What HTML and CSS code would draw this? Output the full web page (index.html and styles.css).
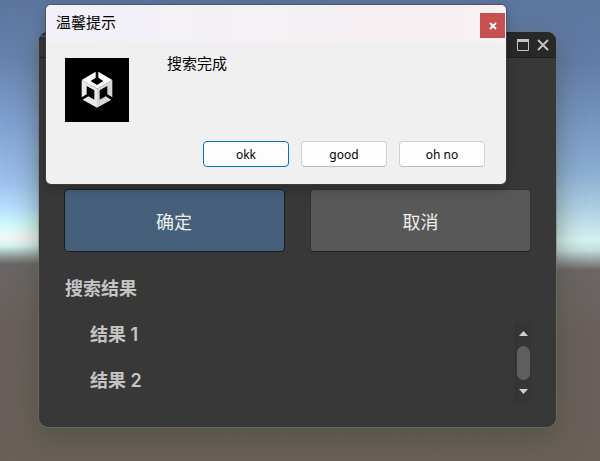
FILE: index.html
```
<!DOCTYPE html>
<html lang="zh-CN">
<head>
<meta charset="utf-8">
<title>温馨提示</title>
<link rel="stylesheet" href="styles.css">
</head>
<body>
<div class="desktop">
  <section class="window">
    <header class="window-bar">
      <svg class="window-icons" width="34" height="14" viewBox="0 0 34 14">
        <path d="M.5 1.500h11v11H.5z" fill="none" stroke="#c4c4c4"/>
        <path d="M0 1h12v3H0z" fill="#c4c4c4"/>
        <path d="M21 2l10 10M31 2l-10 10" fill="none" stroke="#c4c4c4" stroke-width="1.900"/>
      </svg>
    </header>
    <div class="window-body">
      <div class="actions">
        <button class="action action-primary">确定</button>
        <button class="action">取消</button>
      </div>
      <h2 class="heading">搜索结果</h2>
      <div class="results">
        <ul class="result-list">
          <li>结果 1</li>
          <li>结果 2</li>
        </ul>
        <div class="scrollbar">
          <svg width="9" height="5" viewBox="0 0 9 5"><path d="M0 5l4.500-5L9 5z" fill="#d0d0d0"/></svg>
          <div class="thumb"></div>
          <svg width="9" height="5" viewBox="0 0 9 5"><path d="M0 0l4.500 5L9 0z" fill="#d0d0d0"/></svg>
        </div>
      </div>
    </div>
  </section>
  <section class="dialog">
    <header class="dialog-bar">
      <span class="dialog-title">温馨提示</span>
      <button class="dialog-close"><svg width="8" height="8" viewBox="0 0 8 8"><path d="M1 1l6 6M7 1l-6 6" stroke="#fff" stroke-width="1.800"/></svg></button>
    </header>
    <div class="dialog-content">
      <div class="logo">
        <svg width="38" height="44" viewBox="0 0 114 132">
          <path fill="#e9e9e9" d="M11 36V88L26 79V54L49 67V95L31 85L14 95L57 119V62Z"/>
          <path fill="#d6d6d6" d="M103 36V88L88 79V54L65 67V95L83 85L100 95L57 119V62Z"/>
          <path fill="#fff" d="M53 11L11 36L57 62L103 36L61 11V29L76 39L57 51L38 39L53 29Z"/>
        </svg>
      </div>
      <p class="message">搜索完成</p>
    </div>
    <footer class="dialog-buttons">
      <button class="choice choice-default">okk</button>
      <button class="choice">good</button>
      <button class="choice">oh no</button>
    </footer>
  </section>
</div>
</body>
</html>
```
FILE: styles.css
```
* { box-sizing: border-box; }

body {
  margin: 0;
  font-family: "Noto Sans", "Noto Sans CJK SC", sans-serif;
}

button {
  padding: 0;
  font-family: inherit;
}

.desktop {
  position: relative;
  width: 600px;
  height: 461px;
  overflow: hidden;
  background: linear-gradient(#5c759e 0, #6883af 60px, #7f9fcf 120px, #9cbfec 180px, #b5dffd 208px, #d3fbfb 225px, #f4f8f6 238px, #d5f3ef 246px, #858e8d 258px, #6b6665 264px, #695f5b 330px, #6a605a 461px);
}

.desktop::before {
  content: "";
  position: absolute;
  inset: 0;
  background: linear-gradient(#5c769f 0, #627ba7 60px, #7593bf 120px, #8aabd2 170px, #aacbe0 205px, #d3f0f0 240px, #c5dedd 250px, #8c9695 262px, #6b6665 270px, #695f5b 340px, #6a605a 461px);
  mask-image: linear-gradient(90deg, transparent, #000);
}

.window {
  position: absolute;
  left: 39px;
  top: 32px;
  width: 517px;
  height: 395px;
  display: flex;
  flex-direction: column;
  background: #383838;
  border-radius: 9px;
  box-shadow: 0 0 0 1px rgba(120, 120, 120, .5), 0 10px 28px rgba(64, 70, 48, .52);
}

.window-bar {
  display: flex;
  justify-content: flex-end;
  height: 26px;
  padding: 6px 5px 0 0;
  background: linear-gradient(90deg, #383838 7px, #282828 7px);
  border-bottom: 1px solid #202020;
  border-radius: 9px 9px 0 0;
  box-shadow: inset 0 2px 0 #282828;
}

.window-bar::before {
  content: "";
  width: 6px;
  height: 2px;
  margin: -3px auto 0 1px;
  background: #2c5d87;
}

.window-body { padding: 131px 25px 0; }

.actions {
  display: flex;
  gap: 25px;
}

.action {
  width: 221px;
  height: 63px;
  color: #eee;
  font-size: 18px;
  background: #585858;
  border: 1px solid #303030;
  border-bottom-color: #222;
  border-radius: 4px;
}

.action-primary {
  padding-right: 1px;
  background: #46607c;
  border-color: #1c1c1c;
}

.heading {
  margin: 23px 0 0 1px;
  color: #c4c4c4;
  font-size: 18px;
  line-height: 26px;
}

.results {
  display: flex;
  justify-content: space-between;
  margin-top: 22px;
}

.result-list {
  margin: -1px 0 0;
  padding: 0 0 0 26px;
  list-style: none;
  color: #c4c4c4;
  font: 600 18px/26px Inter, "Noto Sans CJK SC", sans-serif;
}

.result-list li + li { margin-top: 20px; }

.scrollbar {
  display: flex;
  flex-direction: column;
  justify-content: space-between;
  align-items: center;
  width: 16px;
  height: 79px;
  padding: 8px 1px 8px;
  background: #353535;
  border-left: 1px solid #303030;
}

.thumb {
  width: 13px;
  height: 34px;
  border-radius: 7px;
  background: #5f5f5f;
}

.dialog {
  position: absolute;
  left: 46px;
  top: 5px;
  width: 460px;
  height: 179px;
  background: #f0f0f0;
  border-radius: 5px;
  overflow: hidden;
  box-shadow: 0 0 0 1px rgba(70, 70, 70, .6), 0 4px 14px rgba(0, 0, 0, .25);
}

.dialog-bar {
  display: flex;
  justify-content: space-between;
  height: 37px;
  padding: 8px 1px 0 10px;
  background: linear-gradient(90deg, #f2f1f9, #f8f0f1);
}

.dialog-title {
  margin-top: -1px;
  color: #000;
  font-size: 15px;
  line-height: 20px;
}

.dialog-close {
  display: flex;
  align-items: center;
  justify-content: center;
  width: 25px;
  height: 25px;
  background: #c75050;
  border: 0;
}

.dialog-content {
  display: flex;
  gap: 38px;
  padding: 16px 19px 0;
}

.logo {
  display: flex;
  align-items: center;
  justify-content: center;
  width: 64px;
  height: 64px;
  background: #000;
}

.message {
  margin: -5px 0 0;
  color: #000;
  font-size: 15px;
  line-height: 20px;
}

.dialog-buttons {
  display: flex;
  justify-content: flex-end;
  gap: 12px;
  padding: 19px 21px 0;
}

.choice {
  width: 86px;
  height: 26px;
  color: #000;
  font-size: 12px;
  background: #fdfdfd;
  border: 1px solid #d0d0d0;
  border-bottom-color: #bbb;
  border-radius: 4px;
}

.choice-default { border-color: #0073c6; }
```
